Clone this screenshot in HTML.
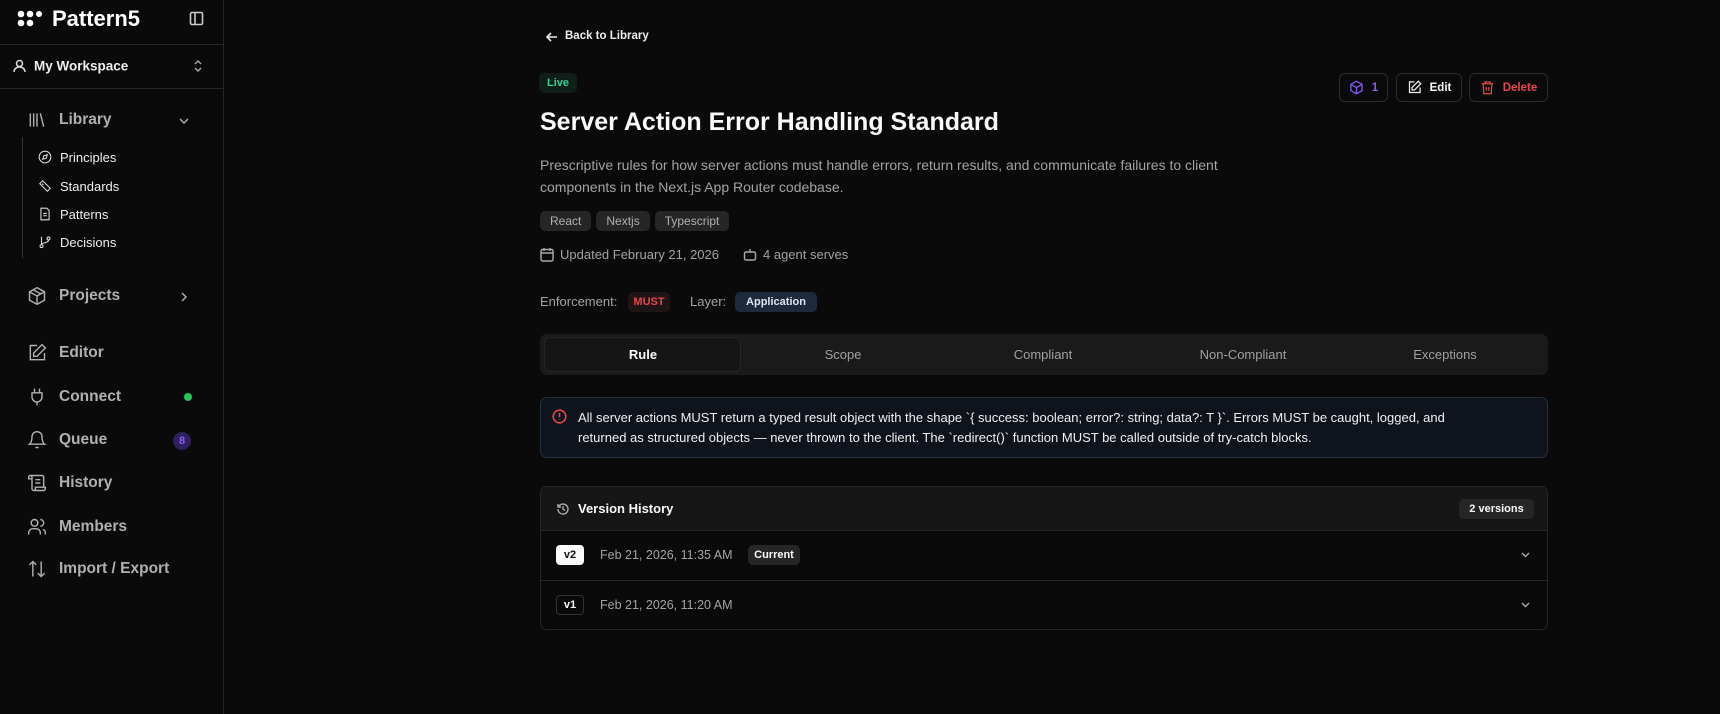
<!DOCTYPE html>
<html><head><meta charset="utf-8"><style>
*{box-sizing:border-box;margin:0;padding:0}
body{width:1720px;height:714px;background:#0a0a0a;font-family:"Liberation Sans",sans-serif;color:#fafafa;position:relative;overflow:hidden}
.a{position:absolute}
.sb{left:0;top:0;width:224px;height:714px;border-right:1px solid #262626;background:#0a0a0a}
.nav{position:absolute;left:27px;display:flex;align-items:center;font-size:15.5px;color:#b0b0b0;font-weight:bold;height:20px}
.nav svg{width:20px;height:20px;margin-right:12px;stroke:#b0b0b0;fill:none;stroke-width:1.7}
.sub{position:absolute;left:38px;display:flex;align-items:center;font-size:13px;color:#eee;height:16px}
.sub svg{width:14px;height:14px;margin-right:8px;stroke:#ddd;fill:none;stroke-width:1.8}
.tag{display:inline-block;background:#262626;color:#b0b0b0;font-size:12px;padding:3px 10px;border-radius:5px;margin-right:5px}
.btn{position:absolute;top:73px;height:29px;border:1px solid #2a2a2a;border-radius:6px;display:flex;align-items:center;justify-content:center;font-size:11.5px;font-weight:bold}
.btn svg{width:15px;height:15px;margin-right:8px;fill:none;stroke-width:2}
.tab{position:absolute;top:0;height:41px;line-height:41px;text-align:center;font-size:13px;color:#a0a0a0;width:200px}
</style></head><body>
<div class="a sb">
 <div class="a" style="left:17px;top:10px;width:28px;height:18px">
  <svg width="28" height="18"><g fill="#fff"><circle cx="4" cy="4" r="3.3"/><circle cx="13" cy="4" r="3.3"/><circle cx="22" cy="4" r="3"/><circle cx="4" cy="13" r="3.3"/><circle cx="13" cy="13" r="3.3"/></g></svg>
 </div>
 <div class="a" style="left:52px;top:6px;font-size:22px;font-weight:bold;color:#fff">Pattern5</div>
 <svg class="a" style="left:189px;top:11px" width="15" height="15" fill="none" stroke="#ccc" stroke-width="1.6"><rect x="1.5" y="1.5" width="12" height="12" rx="1.5"/><line x1="6" y1="1.5" x2="6" y2="13.5"/></svg>
 <div class="a" style="left:0;top:44px;width:223px;border-top:1px solid #262626"></div>
 <svg class="a" style="left:13px;top:59px" width="13" height="14" fill="none" stroke="#ddd" stroke-width="1.5"><circle cx="6.5" cy="4.5" r="3"/><path d="M1 13c0-3 2.5-5 5.5-5s5.5 2 5.5 5"/></svg>
 <div class="a" style="left:34px;top:66px;transform:translateY(-50%);font-size:13.5px;font-weight:bold;color:#eee">My Workspace</div>
 <svg class="a" style="left:192px;top:59px" width="12" height="14" fill="none" stroke="#aaa" stroke-width="1.4"><path d="M3 5l3-3 3 3M3 9l3 3 3-3"/></svg>
 <div class="a" style="left:0;top:88px;width:223px;border-top:1px solid #262626"></div>

 <div class="nav" style="top:110px"><svg viewBox="0 0 24 24"><path d="M4 4v16M8 4v16M12 4v16M16 4l4 16"/></svg>Library</div>
 <svg class="a" style="left:178px;top:115px" width="12" height="12" fill="none" stroke="#aaa" stroke-width="1.5"><path d="M2 4l4 4 4-4"/></svg>
 <div class="a" style="left:22px;top:137px;height:121px;border-left:1px solid #333"></div>
 <div class="sub" style="top:149px"><svg viewBox="0 0 24 24"><circle cx="12" cy="12" r="10"/><path d="M16 8l-2 6-6 2 2-6z"/></svg>Principles</div>
 <div class="sub" style="top:178px"><svg viewBox="0 0 24 24"><path d="M3 8l5-5 13 13-5 5z M7 8l2 2M10 5l2 2"/></svg>Standards</div>
 <div class="sub" style="top:206px"><svg viewBox="0 0 24 24"><path d="M5 2h10l4 4v16H5z M9 11h6M9 15h6"/></svg>Patterns</div>
 <div class="sub" style="top:234px"><svg viewBox="0 0 24 24"><circle cx="6" cy="19" r="2.5"/><circle cx="18" cy="6" r="2.5"/><path d="M6 3v14M18 8.5c0 6-12 4-12 8"/></svg>Decisions</div>

 <div class="nav" style="top:286px"><svg viewBox="0 0 24 24"><path d="M12 2l9 5v10l-9 5-9-5V7z M3 7l9 5 9-5M12 12v10M7.5 4.5l9 5"/></svg>Projects</div>
 <svg class="a" style="left:178px;top:291px" width="12" height="12" fill="none" stroke="#aaa" stroke-width="1.5"><path d="M4 2l4 4-4 4"/></svg>
 <div class="nav" style="top:343px"><svg viewBox="0 0 24 24"><path d="M12 3H4v17h17v-8 M18 2l4 4-10 10H8v-4z"/></svg>Editor</div>
 <div class="nav" style="top:387px"><svg viewBox="0 0 24 24"><path d="M9 2v5M15 2v5M6 7h12v5a6 6 0 0 1-12 0zM12 18v4"/></svg>Connect</div>
 <div class="a" style="left:184px;top:393px;width:8px;height:8px;border-radius:50%;background:#22c55e"></div>
 <div class="nav" style="top:430px"><svg viewBox="0 0 24 24"><path d="M6 8a6 6 0 0 1 12 0c0 7 3 9 3 9H3s3-2 3-9M10 21h4"/></svg>Queue</div>
 <div class="a" style="left:173px;top:432px;width:18px;height:18px;border-radius:9px;background:#2e1f5e;color:#8b5cf6;font-size:11px;font-weight:bold;text-align:center;line-height:18px">8</div>
 <div class="nav" style="top:473px"><svg viewBox="0 0 24 24"><path d="M8 21h12a2 2 0 0 0 2-2v-2H10v2a2 2 0 0 1-4 0V5a2 2 0 0 0-2-2h14a2 2 0 0 1 2 2v12M4 3a2 2 0 0 0-2 2v2h4M10 8h6M10 12h6"/></svg>History</div>
 <div class="nav" style="top:517px"><svg viewBox="0 0 24 24"><circle cx="9" cy="7" r="4"/><path d="M2 21v-2a5 5 0 0 1 5-5h4a5 5 0 0 1 5 5v2M16 3a4 4 0 0 1 0 8M22 21v-2a4 4 0 0 0-3-4"/></svg>Members</div>
 <div class="nav" style="top:559px"><svg viewBox="0 0 24 24"><path d="M7 21V3M3 7l4-4 4 4M17 3v18M13 17l4 4 4-4"/></svg>Import / Export</div>
</div>

<svg class="a" style="left:545px;top:31px" width="13" height="12" fill="none" stroke="#eee" stroke-width="1.6"><path d="M12 6H2M6 2L2 6l4 4"/></svg>
<div class="a" style="left:565px;top:30px;font-size:11.5px;font-weight:bold;color:#eee">Back to Library</div>
<div class="a" style="left:539px;top:73px;width:38px;height:20px;border-radius:5px;background:#0f1f17;color:#34d399;font-size:11px;font-weight:bold;text-align:center;line-height:20px">Live</div>
<div class="a" style="left:540px;top:108px;font-size:25px;font-weight:bold;color:#fafafa">Server Action Error Handling Standard</div>
<div class="a" style="left:540px;top:154px;width:730px;font-size:14px;line-height:22px;color:#a3a3a3">Prescriptive rules for how server actions must handle errors, return results, and communicate failures to client components in the Next.js App Router codebase.</div>
<div class="a" style="left:540px;top:211px"><span class="tag">React</span><span class="tag">Nextjs</span><span class="tag">Typescript</span></div>
<svg class="a" style="left:540px;top:247px" width="14" height="15" fill="none" stroke="#aaa" stroke-width="1.4"><rect x="1" y="2.5" width="12" height="11.5" rx="1.5"/><path d="M1 6h12M4 1v3M10 1v3"/></svg>
<div class="a" style="left:560px;top:247px;font-size:13px;color:#a3a3a3">Updated February 21, 2026</div>
<svg class="a" style="left:743px;top:247px" width="14" height="15" fill="none" stroke="#aaa" stroke-width="1.4"><rect x="1.5" y="5" width="11" height="8" rx="1.5"/><path d="M7 5V2M5 9h0M9 9h0"/></svg>
<div class="a" style="left:763px;top:247px;font-size:13px;color:#a3a3a3">4 agent serves</div>
<div class="a" style="left:540px;top:294px;font-size:13px;color:#a3a3a3">Enforcement:</div>
<div class="a" style="left:628px;top:292px;width:42px;height:20px;border-radius:5px;background:#1f1416;color:#e5484d;font-size:11px;font-weight:bold;text-align:center;line-height:20px">MUST</div>
<div class="a" style="left:690px;top:294px;font-size:13px;color:#a3a3a3">Layer:</div>
<div class="a" style="left:735px;top:292px;width:82px;height:20px;border-radius:5px;background:#1e293b;color:#dbe4f0;font-size:11px;font-weight:bold;text-align:center;line-height:20px">Application</div>

<div class="btn" style="left:1339px;width:49px;color:#8b5cf6"><svg viewBox="0 0 24 24" stroke="#8b5cf6"><path d="M12 2l9 5v10l-9 5-9-5V7z M3 7l9 5 9-5M12 12v10"/></svg>1</div>
<div class="btn" style="left:1396px;width:66px;color:#fafafa"><svg viewBox="0 0 24 24" stroke="#eee"><path d="M12 3H4v17h17v-8 M18 2l4 4-10 10H8v-4z"/></svg>Edit</div>
<div class="btn" style="left:1469px;width:79px;color:#e5484d"><svg viewBox="0 0 24 24" stroke="#e5484d"><path d="M3 6h18M8 6V3h8v3M5 6l1 16h12l1-16M10 11v6M14 11v6"/></svg>Delete</div>

<div class="a" style="left:540px;top:334px;width:1008px;height:41px;background:#1a1a1a;border-radius:7px">
 <div class="a" style="left:4px;top:3px;width:197px;height:35px;background:#151515;border:1px solid #262626;border-radius:6px"></div>
 <div class="tab" style="left:3px;color:#fafafa;font-weight:bold">Rule</div>
 <div class="tab" style="left:203px">Scope</div>
 <div class="tab" style="left:403px">Compliant</div>
 <div class="tab" style="left:603px">Non-Compliant</div>
 <div class="tab" style="left:805px">Exceptions</div>
</div>

<div class="a" style="left:540px;top:397px;width:1008px;height:61px;background:#0f131b;border:1px solid #27303d;border-radius:7px">
 <svg class="a" style="left:11px;top:11px" width="15" height="15" fill="none" stroke="#e5484d" stroke-width="1.6"><circle cx="7.5" cy="7.5" r="6.3"/><path d="M7.5 4v4.2M7.5 10.5v.5"/></svg>
 <div class="a" style="left:37px;top:10px;width:915px;font-size:13px;line-height:20px;color:#f0f0f0">All server actions MUST return a typed result object with the shape `{ success: boolean; error?: string; data?: T }`. Errors MUST be caught, logged, and returned as structured objects — never thrown to the client. The `redirect()` function MUST be called outside of try-catch blocks.</div>
</div>

<div class="a" style="left:540px;top:486px;width:1008px;height:144px;border:1px solid #262626;border-radius:7px;overflow:hidden">
 <div class="a" style="left:0;top:0;width:1008px;height:44px;background:#161616;border-bottom:1px solid #262626"></div>
 <svg class="a" style="left:15px;top:15px" width="14" height="14" fill="none" stroke="#aaa" stroke-width="1.4"><path d="M2 7a5 5 0 1 0 1.5-3.5L2 5M2 2v3h3M7 4v3l2 1.5"/></svg>
 <div class="a" style="left:37px;top:14px;font-size:13px;font-weight:bold;color:#fafafa">Version History</div>
 <div class="a" style="left:918px;top:12px;width:75px;height:20px;border-radius:5px;background:#262626;color:#fafafa;font-size:11px;font-weight:bold;text-align:center;line-height:20px">2 versions</div>
 <div class="a" style="left:15px;top:58px;width:28px;height:20px;border-radius:4px;background:#fafafa;color:#111;font-size:11px;font-weight:bold;text-align:center;line-height:20px">v2</div>
 <div class="a" style="left:59px;top:61px;font-size:12.5px;color:#a3a3a3">Feb 21, 2026, 11:35 AM</div>
 <div class="a" style="left:207px;top:58px;width:52px;height:20px;border-radius:5px;background:#262626;color:#fafafa;font-size:11px;font-weight:bold;text-align:center;line-height:20px">Current</div>
 <svg class="a" style="left:979px;top:62px" width="11" height="11" fill="none" stroke="#aaa" stroke-width="1.4"><path d="M2 4l3.5 3.5L9 4"/></svg>
 <div class="a" style="left:0;top:93px;width:1008px;border-top:1px solid #262626"></div>
 <div class="a" style="left:15px;top:108px;width:28px;height:20px;border-radius:4px;border:1px solid #333;color:#fafafa;font-size:11px;font-weight:bold;text-align:center;line-height:18px">v1</div>
 <div class="a" style="left:59px;top:111px;font-size:12.5px;color:#a3a3a3">Feb 21, 2026, 11:20 AM</div>
 <svg class="a" style="left:979px;top:112px" width="11" height="11" fill="none" stroke="#aaa" stroke-width="1.4"><path d="M2 4l3.5 3.5L9 4"/></svg>
</div>
</body></html>
